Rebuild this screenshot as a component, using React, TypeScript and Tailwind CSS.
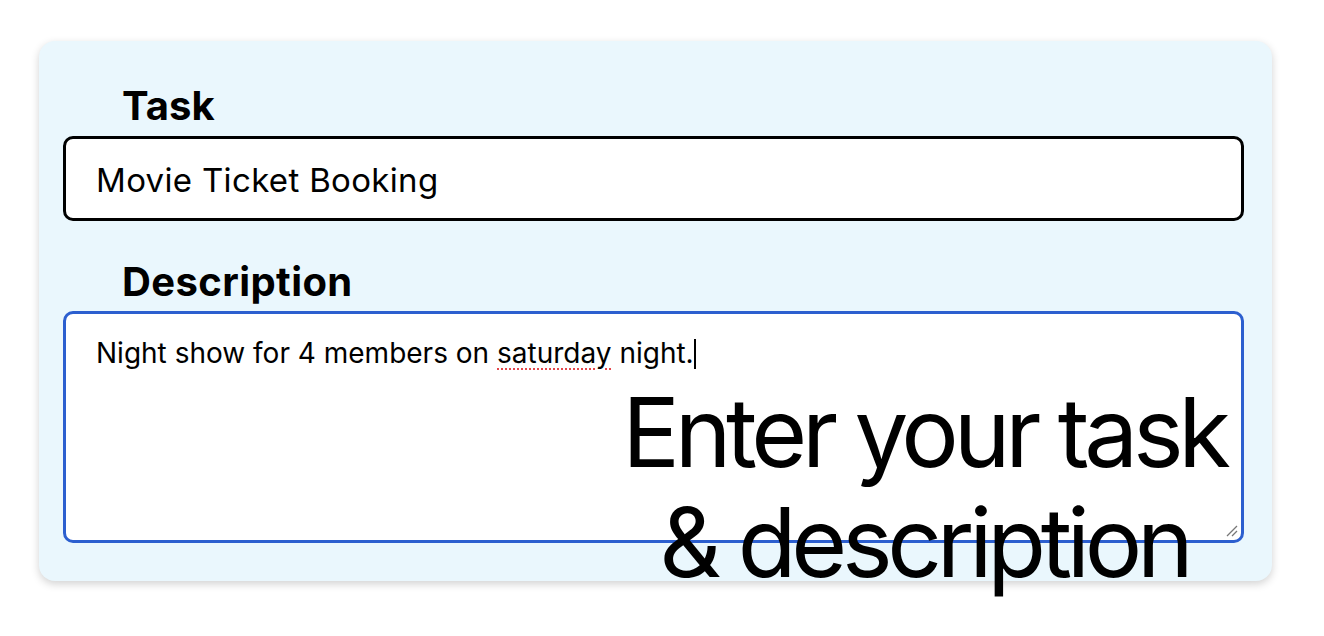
export default function App() {
  return (
    <div className="min-h-screen bg-white pt-[41px] pl-[39px]" style={{ fontFamily: 'Inter, "Noto Sans", sans-serif' }}>
      {/* Task card */}
      <div className="relative w-[1233px] h-[540px] rounded-2xl bg-[#eaf7fd] shadow-[0_3px_8px_rgba(0,0,0,0.18)] pl-[24px] pr-[28px] pt-[41px]">
        <label className="block pl-[59px] text-[40px] leading-[48px] font-bold text-black">Task</label>
        <div className="mt-[6px] h-[85px] rounded-[10px] border-[3px] border-black bg-white flex items-center pl-[30px] pt-[4px]">
          <span className="text-[33px] tracking-[0.01em] text-black">Movie Ticket Booking</span>
        </div>

        <label className="block mt-[37px] pl-[59px] text-[40px] leading-[48px] font-bold tracking-[0.01em] text-black">Description</label>
        <div className="relative mt-[5px] h-[232px] rounded-[10px] border-[3px] border-[#2c5fcf] bg-white pl-[30px] pt-[22px]">
          <p className="text-[28px] leading-[34px] text-black">
            Night show for 4 members on{' '}
            <span className="underline decoration-dotted decoration-[#e5484d] decoration-2 underline-offset-[5px]">saturday</span>{' '}
            night.<span className="inline-block w-[2px] h-[30px] bg-black align-[-6px]" />
          </p>
          {/* resize handle */}
          <svg className="absolute right-[2px] bottom-[2px]" width="14" height="14" viewBox="0 0 14 14">
            <path d="M2 12 L12 2 M7 12 L12 7" stroke="#777" strokeWidth="1.3" />
          </svg>
        </div>

        {/* overlay caption */}
        <div className="absolute left-[535px] top-[336px] w-[700px] text-center text-[96px] leading-[110px] tracking-[-0.055em] text-black whitespace-nowrap">
          Enter your task
          <br />
          &amp; description
        </div>
      </div>
    </div>
  );
}
